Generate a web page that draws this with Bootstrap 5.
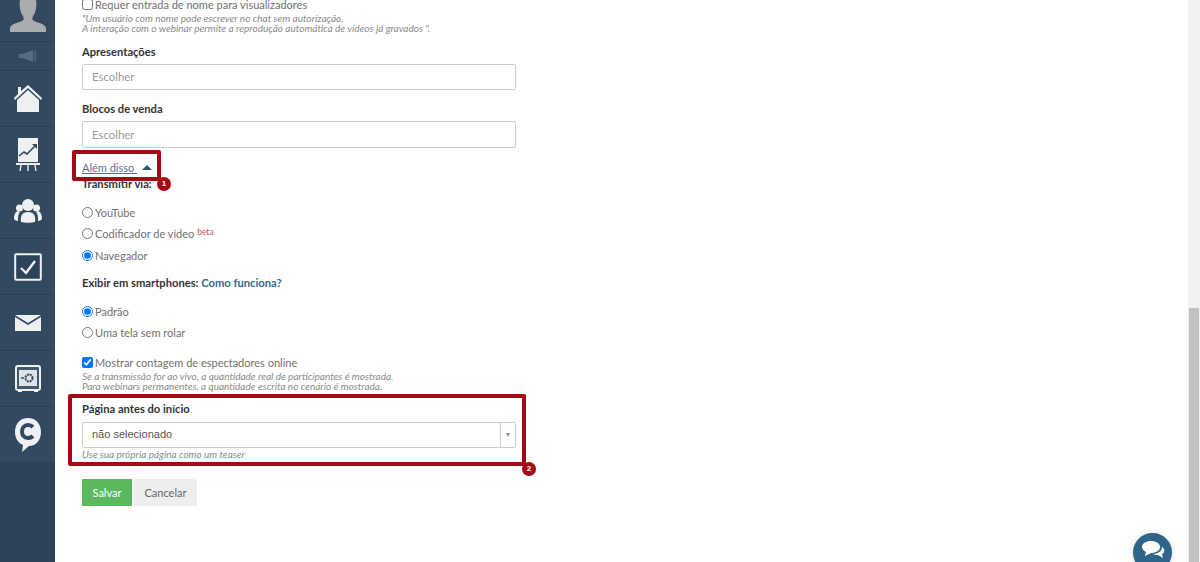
<!DOCTYPE html>
<html lang="pt"><head><meta charset="utf-8"><title>Webinar</title>
<link href="https://cdn.jsdelivr.net/npm/bootstrap@5.3.0/dist/css/bootstrap.min.css" rel="stylesheet">
<style>
html,body{height:562px;overflow:hidden;background:#fff}
body{font-family:Lato,"Liberation Sans",sans-serif;font-size:11px;color:#707070;position:relative}
.shell{height:562px}
.rail{width:55px;flex:none;background:#33495f;height:562px}
.rail-item{border-bottom:1px solid #2c4054;display:flex;align-items:center;justify-content:center;height:56px}
.rail-item:last-of-type{height:58px}
.rail-user{height:42px;align-items:flex-start}
.rail-sound{height:29px}
.rail-rest{background:#2f4358;flex:1}
.pane{flex:1;padding:0 0 0 27px;min-width:0}
.formbox{width:434px;margin-top:-3px;display:flex;flex-direction:column}
.fld-label{font-weight:700;color:#333;font-size:11.2px;line-height:16px;margin:11px 0 4px}
.fld-input{height:26px;border:1px solid #ccc;border-radius:2px;padding:0 9px;font-size:11.4px;line-height:24px;color:#999;background:#fff}
.fld-input-tall{height:27px;line-height:25px}
.hint{font-style:italic;font-size:10px;line-height:10px;color:#8a8a8a}
.opt{display:flex;align-items:center;gap:2px;line-height:16px;font-size:11px;color:#707070;margin:0}
.opt input{margin:-2px 0 0;width:11px;height:11px;flex:none}
.gap-s{margin-top:5px}
.gap-l{margin-top:14px}
.beta{color:#c9525c;font-size:8.5px;position:relative;top:-3px}
.more-row{margin-top:12px;line-height:16px}
.more{color:#55748f;text-decoration:underline;font-size:11px}
.caret-up{display:inline-block;width:0;height:0;border-left:5px solid transparent;border-right:5px solid transparent;border-bottom:5px solid #2d5878;margin-left:5px;vertical-align:2px}
.how{color:#33698f;font-weight:700;text-decoration:none}
.label-via{line-height:14px;margin:1px 0 14px}
.label-phone{margin:11px 0 13px}
.label-page{margin:10px 0 5px}
.pick{height:26px;border:1px solid #ccc;border-radius:2px;display:flex;background:#fff;font-family:"Liberation Sans",sans-serif;font-size:11px;color:#555}
.pick-text{flex:1;padding-left:9px;line-height:22px}
.pick-arrow{width:15px;border-left:1px solid #ccc;display:flex;align-items:center;justify-content:center}
.pick-arrow i{width:0;height:0;border-left:2.5px solid transparent;border-right:2.5px solid transparent;border-top:4px solid #888}
.hint-after{margin-top:1px}
.actions{margin-top:20px;gap:2px}
.btn-save,.btn-cancel{font-size:11px;height:27px;border-radius:0;line-height:25px;padding:0}
.btn-save{background:#5cb85c;border:1px solid #5cb85c;color:#fff;width:50px}
.btn-cancel{background:#eee;border:1px solid #eee;color:#666;width:63px}
.callout{position:absolute;border:4px solid #a50a14;border-radius:2px}
.callout-a{left:72px;top:150px;width:89px;height:31px}
.callout-b{left:68px;top:394px;width:458px;height:72px}
.pin{position:absolute;width:14px;height:14px;border-radius:50%;background:#a50a14;color:#fff;font:700 8px/14px "Liberation Sans",sans-serif;text-align:center}
.pin-a{left:157px;top:177px}
.pin-b{left:522px;top:462px}
.scroll-track{position:absolute;right:0;top:0;width:12px;height:562px;background:#f1f1f1}
.scroll-thumb{position:absolute;left:1px;top:308px;width:10px;height:254px;background:#c1c1c1}
.chat-bubble{position:absolute;left:1133px;top:533px;width:39px;height:39px;border-radius:50%;background:#2f658b;box-shadow:0 0 6px rgba(0,0,0,.15);display:flex;justify-content:center;padding-top:7px}
</style></head>
<body>
<div class="d-flex shell">
 <nav class="rail d-flex flex-column">
  <div class="rail-item rail-user"><svg width="38" height="32" viewBox="0 0 38 32"><path fill="#a9adb1" d="M11 0h16c1 6 0 12-3 16-1 2-1 4 1 5 5 2 11 3 12 7v4H1v-4c1-4 7-5 12-7 2-1 2-3 1-5-3-4-4-10-3-16z"/></svg></div>
  <div class="rail-item rail-sound"><svg width="20" height="14" viewBox="0 0 20 14"><path fill="#546c83" d="M1 5h3l3-1 8-3v12l-8-3-3-1H1z"/><rect x="16" y="2" width="2" height="10" fill="#4a6279"/></svg></div>
  <div class="rail-item"><svg width="30" height="28" viewBox="0 0 30 28"><path fill="#eef0f2" d="M15 0 29 13l-1 2L15 3 2 15l-1-2L5 9V2h3v4z"/><path fill="#eef0f2" d="M15 5 26 15v12H4V15z"/></svg></div>
  <div class="rail-item"><svg width="24" height="34" viewBox="0 0 24 34"><path fill="#eef0f2" d="M2 0h20v24H2z"/><path fill="none" stroke="#33495f" stroke-width="1.6" d="M3 18l5-4 3 2 8-8"/><path fill="#33495f" d="M16 6h5v5z"/><rect y="25" width="24" height="2" fill="#eef0f2"/><path stroke="#eef0f2" stroke-width="1.400" d="M5 27l-1 6M12 27v6M19 27l1 6"/></svg></div>
  <div class="rail-item"><svg width="28" height="24" viewBox="0 0 28 24"><circle cx="14" cy="6" r="6" fill="#eef0f2"/><circle cx="5.500" cy="9" r="3.500" fill="#eef0f2"/><circle cx="22.500" cy="9" r="3.500" fill="#eef0f2"/><path fill="#eef0f2" d="M7 23c-1-6 1-10 7-10s8 4 7 10c-4 1-10 1-14 0z"/><path fill="#eef0f2" d="M0 20c0-4 1-7 4-8l2 1c-2 2-2 5-2 9-2 0-3-1-4-2zM28 20c0-4-1-7-4-8l-2 1c2 2 2 5 2 9 2 0 3-1 4-2z"/></svg></div>
  <div class="rail-item"><svg width="28" height="28" viewBox="0 0 28 28"><rect x="1.200" y="1.200" width="25.600" height="25.600" rx="1" fill="#2b4258" stroke="#eef0f2" stroke-width="2"/><path fill="none" stroke="#eef0f2" stroke-width="2.400" d="M7 15l5 5 9-12"/></svg></div>
  <div class="rail-item"><svg width="26" height="16" viewBox="0 0 26 16"><path fill="#eef0f2" d="M0 0h26L13 8z"/><path fill="#eef0f2" d="M0 2l13 8 13-8v14H0z"/></svg></div>
  <div class="rail-item"><svg width="26" height="28" viewBox="0 0 26 28"><rect x="1" y="1" width="24" height="24" rx="2" fill="#41586d" stroke="#eef0f2" stroke-width="2"/><rect x="4" y="5" width="18" height="16" fill="#dfe3e7"/><circle cx="14" cy="13" r="3.500" fill="none" stroke="#33495f" stroke-width="2" stroke-dasharray="2 .8"/><path stroke="#33495f" stroke-width="1.500" d="M6 13h3"/><path fill="#eef0f2" d="M3 25h4v2H3zM19 25h4v2h-4z"/></svg></div>
  <div class="rail-item"><svg width="28" height="36" viewBox="0 0 28 36"><path fill="#eef0f2" d="M14 1c8 0 13 6 13 14s-5 14-12 14l-7 6 1-7C4 26 1 21 1 15 1 7 6 1 14 1z"/><path fill="none" stroke="#33495f" stroke-width="4" d="M19 10c-1.500-1.500-3-2-5-2-4 0-6 3-6 6.500s2 6.500 6 6.500c2 0 3.500-.5 5-2"/></svg></div>
  <div class="rail-rest"></div>
 </nav>
 <main class="pane">
  <form class="formbox">
   <label class="opt"><input type="checkbox"><span>Requer entrada de nome para visualizadores</span></label>
   <div class="hint">"Um usuário com nome pode escrever no chat sem autorização.<br>A interação com o webinar permite a reprodução automática de vídeos já gravados ".</div>
   <div class="fld-label">Apresentações</div>
   <div class="fld-input">Escolher</div>
   <div class="fld-label">Blocos de venda</div>
   <div class="fld-input fld-input-tall">Escolher</div>
   <div class="more-row"><a class="more" href="#">Além disso&nbsp;</a><span class="caret-up"></span></div>
   <div class="fld-label label-via">Transmitir via:</div>
   <label class="opt"><input type="radio" name="via"><span>YouTube</span></label>
   <label class="opt gap-s"><input type="radio" name="via"><span>Codificador de vídeo <span class="beta">beta</span></span></label>
   <label class="opt gap-s"><input type="radio" name="via" checked><span>Navegador</span></label>
   <div class="fld-label label-phone">Exibir em smartphones: <a class="how" href="#">Como funciona?</a></div>
   <label class="opt"><input type="radio" name="tela" checked><span>Padrão</span></label>
   <label class="opt gap-s"><input type="radio" name="tela"><span>Uma tela sem rolar</span></label>
   <label class="opt gap-l"><input type="checkbox" checked><span>Mostrar contagem de espectadores online</span></label>
   <div class="hint">Se a transmissão for ao vivo, a quantidade real de participantes é mostrada.<br>Para webinars permanentes, a quantidade escrita no cenário é mostrada.</div>
   <div class="fld-label label-page">Página antes do início</div>
   <div class="pick"><div class="pick-text">não selecionado</div><div class="pick-arrow"><i></i></div></div>
   <div class="hint hint-after">Use sua própria página como um teaser</div>
   <div class="d-flex actions"><button type="button" class="btn btn-save">Salvar</button><button type="button" class="btn btn-cancel">Cancelar</button></div>
  </form>
 </main>
</div>
<div class="callout callout-a"></div><div class="pin pin-a">1</div>
<div class="callout callout-b"></div><div class="pin pin-b">2</div>
<div class="scroll-track"><div class="scroll-thumb"></div></div>
<div class="chat-bubble"><svg width="24" height="20" viewBox="0 0 24 20"><path fill="#fff" d="M10 1c5 0 9 2.500 9 6s-4 6-9 6l-6 3 1-4C3 11 1 9 1 7c0-3.500 4-6 9-6z"/><path fill="#fff" d="M21 7c2 1 3 3 2 5-.5 1-1 2-2 2l1 4-5-3c-2 0-3 0-5-1 5 0 9-3 9-7z"/></svg></div>
<script src="https://cdn.jsdelivr.net/npm/bootstrap@5.3.0/dist/js/bootstrap.bundle.min.js"></script>
</body></html>
